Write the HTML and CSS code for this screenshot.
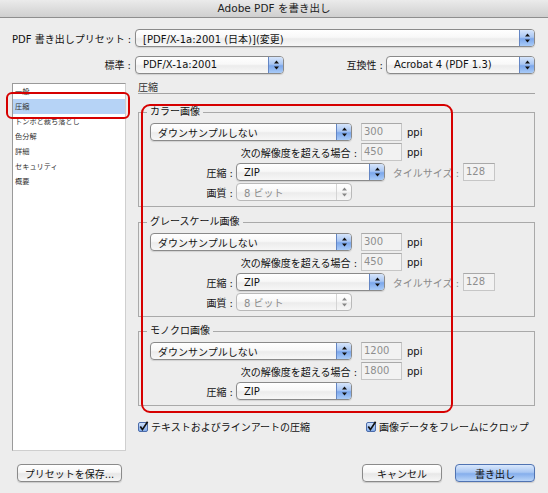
FILE: index.html
```html
<!DOCTYPE html>
<html lang="ja">
<head>
<meta charset="utf-8">
<title>Adobe PDF を書き出し</title>
<link rel="stylesheet" href="styles.css">
</head>
<body>
<div class="window">
  <div class="titlebar">Adobe PDF を書き出し</div>

  <div class="top">
    <div class="row r1">
      <span class="lbl-main">PDF 書き出しプリセット :</span>
      <div class="select sel-preset"><span class="val">[PDF/X-1a:2001 (日本)](変更)</span><span class="arr"><svg width="7" height="10" viewBox="0 0 7 10"><path d="M3.5 0.5 L6 3.5 L1 3.5Z M1 6.5 L6 6.5 L3.5 9.5Z" fill="#111"/></svg></span></div>
    </div>
    <div class="row r2">
      <span class="lbl-main">標準 :</span>
      <div class="select sel-std"><span class="val">PDF/X-1a:2001</span><span class="arr"><svg width="7" height="10" viewBox="0 0 7 10"><path d="M3.5 0.5 L6 3.5 L1 3.5Z M1 6.5 L6 6.5 L3.5 9.5Z" fill="#111"/></svg></span></div>
      <span class="lbl-compat">互換性 :</span>
      <div class="select sel-compat"><span class="val">Acrobat 4 (PDF 1.3)</span><span class="arr"><svg width="7" height="10" viewBox="0 0 7 10"><path d="M3.5 0.5 L6 3.5 L1 3.5Z M1 6.5 L6 6.5 L3.5 9.5Z" fill="#111"/></svg></span></div>
    </div>
  </div>

  <div class="main">
    <ul class="sidebar">
      <li>一般</li>
      <li class="sel">圧縮</li>
      <li>トンボと裁ち落とし</li>
      <li>色分解</li>
      <li>詳細</li>
      <li>セキュリティ</li>
      <li>概要</li>
    </ul>

    <div class="pane">
      <div class="pane-head">圧縮</div>

      <div class="group g-color">
        <div class="group-title">カラー画像</div>
        <div class="grow">
          <div class="select sel-ds"><span class="val">ダウンサンプルしない</span><span class="arr"><svg width="7" height="10" viewBox="0 0 7 10"><path d="M3.5 0.5 L6 3.5 L1 3.5Z M1 6.5 L6 6.5 L3.5 9.5Z" fill="#111"/></svg></span></div>
          <div class="num num-ds">300</div><span class="unit">ppi</span>
        </div>
        <div class="grow">
          <span class="lbl-res">次の解像度を超える場合 :</span>
          <div class="num">450</div><span class="unit">ppi</span>
        </div>
        <div class="grow">
          <span class="lbl-short">圧縮 :</span>
          <div class="select sel-zip"><span class="val">ZIP</span><span class="arr"><svg width="7" height="10" viewBox="0 0 7 10"><path d="M3.5 0.5 L6 3.5 L1 3.5Z M1 6.5 L6 6.5 L3.5 9.5Z" fill="#111"/></svg></span></div>
          <span class="lbl-tile">タイルサイズ :</span>
          <div class="num num-tile">128</div>
        </div>
        <div class="grow">
          <span class="lbl-short">画質 :</span>
          <div class="select sel-q disabled"><span class="val">8 ビット</span><span class="arr"><svg width="7" height="10" viewBox="0 0 7 10"><path d="M3.5 0.5 L6 3.5 L1 3.5Z M1 6.5 L6 6.5 L3.5 9.5Z" fill="#888"/></svg></span></div>
        </div>
      </div>

      <div class="group g-gray">
        <div class="group-title">グレースケール画像</div>
        <div class="grow">
          <div class="select sel-ds"><span class="val">ダウンサンプルしない</span><span class="arr"><svg width="7" height="10" viewBox="0 0 7 10"><path d="M3.5 0.5 L6 3.5 L1 3.5Z M1 6.5 L6 6.5 L3.5 9.5Z" fill="#111"/></svg></span></div>
          <div class="num num-ds">300</div><span class="unit">ppi</span>
        </div>
        <div class="grow">
          <span class="lbl-res">次の解像度を超える場合 :</span>
          <div class="num">450</div><span class="unit">ppi</span>
        </div>
        <div class="grow">
          <span class="lbl-short">圧縮 :</span>
          <div class="select sel-zip"><span class="val">ZIP</span><span class="arr"><svg width="7" height="10" viewBox="0 0 7 10"><path d="M3.5 0.5 L6 3.5 L1 3.5Z M1 6.5 L6 6.5 L3.5 9.5Z" fill="#111"/></svg></span></div>
          <span class="lbl-tile">タイルサイズ :</span>
          <div class="num num-tile">128</div>
        </div>
        <div class="grow">
          <span class="lbl-short">画質 :</span>
          <div class="select sel-q disabled"><span class="val">8 ビット</span><span class="arr"><svg width="7" height="10" viewBox="0 0 7 10"><path d="M3.5 0.5 L6 3.5 L1 3.5Z M1 6.5 L6 6.5 L3.5 9.5Z" fill="#888"/></svg></span></div>
        </div>
      </div>

      <div class="group g-mono">
        <div class="group-title">モノクロ画像</div>
        <div class="grow">
          <div class="select sel-ds"><span class="val">ダウンサンプルしない</span><span class="arr"><svg width="7" height="10" viewBox="0 0 7 10"><path d="M3.5 0.5 L6 3.5 L1 3.5Z M1 6.5 L6 6.5 L3.5 9.5Z" fill="#111"/></svg></span></div>
          <div class="num num-ds">1200</div><span class="unit">ppi</span>
        </div>
        <div class="grow">
          <span class="lbl-res">次の解像度を超える場合 :</span>
          <div class="num">1800</div><span class="unit">ppi</span>
        </div>
        <div class="grow">
          <span class="lbl-short">圧縮 :</span>
          <div class="select sel-q"><span class="val">ZIP</span><span class="arr"><svg width="7" height="10" viewBox="0 0 7 10"><path d="M3.5 0.5 L6 3.5 L1 3.5Z M1 6.5 L6 6.5 L3.5 9.5Z" fill="#111"/></svg></span></div>
        </div>
      </div>

      <div class="checks">
        <label class="check check-1"><svg class="cb" width="11" height="11" viewBox="0 0 11 11"><defs><linearGradient id="cbg1" x1="0" y1="0" x2="0" y2="1"><stop offset="0" stop-color="#d3e3fb"/><stop offset="1" stop-color="#80aaeb"/></linearGradient></defs><rect x="0.5" y="1.5" width="9" height="9" rx="1.5" fill="url(#cbg1)" stroke="#4c6ca9"/><path d="M2.3 5.6 L4.4 8.6 L9.6 0.8" fill="none" stroke="#111" stroke-width="1.7"/></svg><span>テキストおよびラインアートの圧縮</span></label>
        <label class="check"><svg class="cb" width="11" height="11" viewBox="0 0 11 11"><defs><linearGradient id="cbg2" x1="0" y1="0" x2="0" y2="1"><stop offset="0" stop-color="#d3e3fb"/><stop offset="1" stop-color="#80aaeb"/></linearGradient></defs><rect x="0.5" y="1.5" width="9" height="9" rx="1.5" fill="url(#cbg2)" stroke="#4c6ca9"/><path d="M2.3 5.6 L4.4 8.6 L9.6 0.8" fill="none" stroke="#111" stroke-width="1.7"/></svg><span>画像データをフレームにクロップ</span></label>
      </div>
    </div>
  </div>

  <div class="footer">
    <div class="btn btn-save">プリセットを保存...</div>
    <div class="btn btn-cancel">キャンセル</div>
    <div class="btn btn-default">書き出し</div>
  </div>

  <div class="ring ring-side"></div>
  <div class="ring ring-main"></div>
</div>
</body>
</html>
```

FILE: styles.css
```css
* { box-sizing: border-box; }
html, body { margin: 0; padding: 0; }
body {
  background: #ededed;
  font-family: "DejaVu Sans", "Noto Sans CJK JP", sans-serif;
  font-size: 10px;
  color: #111;
}
.window {
  position: relative;
  width: 548px;
  height: 493px;
  overflow: hidden;
  background: #ededed;
}
.titlebar {
  height: 18px;
  line-height: 17px;
  text-align: center;
  font-size: 10.5px;
  color: #222;
  background: linear-gradient(#ebebeb, #cfcfcf);
  border-bottom: 1px solid #8e8e8e;
}

/* top rows */
.top { padding: 10px 13px 0 12px; }
.row { display: flex; align-items: center; }
.r1 { height: 20px; }
.r2 { height: 19px; margin-top: 7px; }
.lbl-main { width: 119px; text-align: right; margin-right: 4px; white-space: nowrap; }
.sel-preset { flex: 1; height: 20px; }
.sel-std { width: 149px; height: 19px; }
.lbl-compat { flex: 1; text-align: right; margin-right: 3px; white-space: nowrap; }
.sel-compat { width: 149px; height: 19px; }

/* popup select */
.select {
  display: flex;
  align-items: stretch;
  height: 18px;
  border: 1px solid #8a8a8a;
  border-radius: 4px;
  background: linear-gradient(#ffffff 0%, #f8f8f8 45%, #ececec 55%, #f7f7f7 100%);
  box-shadow: 0 1px 1px rgba(0, 0, 0, 0.12);
  overflow: hidden;
  color: #111;
}
.select .val {
  flex: 1;
  padding-left: 7px;
  display: flex;
  align-items: center;
  white-space: nowrap;
  overflow: hidden;
}
.select .arr {
  width: 15px;
  border-left: 1px solid #6486c4;
  background: linear-gradient(#d6e5fb 0%, #aac7f3 45%, #7ca7eb 55%, #a9cbf7 100%);
  display: flex;
  align-items: center;
  justify-content: center;
}
.select.disabled { border-color: #b9b9b9; color: #8c8c8c; box-shadow: none; }
.select.disabled .arr { background: transparent; border-left: 1px solid #d4d4d4; }

/* main */
.main {
  display: flex;
  gap: 12px;
  padding-left: 12px;
  margin-top: 9px;
}
.sidebar {
  list-style: none;
  margin: 0;
  padding: 0;
  width: 114px;
  height: 368px;
  flex: none;
  background: #fff;
  border: 1px solid #9a9a9a;
  border-right-color: #cfcfcf;
  border-bottom-color: #cfcfcf;
  font-size: 7.2px;
  color: #333;
}
.sidebar li { height: 15px; line-height: 15px; padding-left: 2px; white-space: nowrap; }
.sidebar li.sel { background: #b6d3f6; }

.pane { width: 397px; }
.pane-head {
  height: 11px;
  line-height: 10px;
  border-bottom: 1px solid #a3a3a3;
  color: #333;
}
.group {
  border: 1px solid #a9a9a9;
  padding: 0 11px 5px 11px;
}
.g-color { margin-top: 18px; }
.g-gray { margin-top: 15px; }
.g-mono { margin-top: 14px; }
.group-title {
  width: max-content;
  height: 12px;
  line-height: 12px;
  margin: -7px 0 0 -3px;
  padding: 0 3px;
  background: #ededed;
}
.grow { display: flex; align-items: center; height: 18px; margin-top: 2px; }
.group-title + .grow { margin-top: 5px; }

.sel-ds { width: 202px; }
.sel-zip { width: 149px; }
.sel-q { width: 116px; }
.lbl-res { width: 207px; text-align: right; margin-right: 4px; white-space: nowrap; }
.lbl-short { width: 83px; text-align: right; margin-right: 3px; white-space: nowrap; }
.lbl-tile { width: 74px; text-align: right; margin-right: 4px; color: #8a8a8a; white-space: nowrap; }

.num {
  width: 41px;
  height: 18px;
  border: 1px solid #c6c6c6;
  border-top-color: #a9a9a9;
  background: #f2f2f2;
  color: #8e8e8e;
  padding: 1px 0 0 2px;
  line-height: 14px;
}
.num-ds { margin-left: 9px; }
.num-tile { width: 32px; }
.unit { margin-left: 5px; }

.checks { display: flex; align-items: center; height: 14px; margin-top: 13px; }
.check { display: flex; align-items: center; }
.check-1 { width: 228px; }
.cb { display: block; margin-right: 2px; }

/* footer */
.footer {
  display: flex;
  padding: 0 13px 0 17px;
  margin-top: 13px;
}
.btn {
  height: 18px;
  border: 1px solid #8a8a8a;
  border-radius: 4px;
  background: linear-gradient(#ffffff 0%, #f6f6f6 45%, #e7e7e7 55%, #f6f6f6 100%);
  box-shadow: 0 1px 1px rgba(0, 0, 0, 0.15);
  display: flex;
  align-items: center;
  justify-content: center;
  white-space: nowrap;
}
.btn-save { width: 105px; margin-right: auto; }
.btn-cancel { width: 80px; }
.btn-default {
  width: 80px;
  margin-left: 13px;
  border-color: #5073b2;
  background: linear-gradient(#dae8fc 0%, #a9c7f3 45%, #85aeec 55%, #bad5f8 100%);
}

/* annotation rings */
.ring { position: absolute; border: 2px solid #d60000; pointer-events: none; }
.ring-side { left: 6px; top: 92px; width: 124px; height: 27px; border-radius: 6px; }
.ring-main { left: 141px; top: 104px; width: 312px; height: 309px; border-radius: 9px; }
```
